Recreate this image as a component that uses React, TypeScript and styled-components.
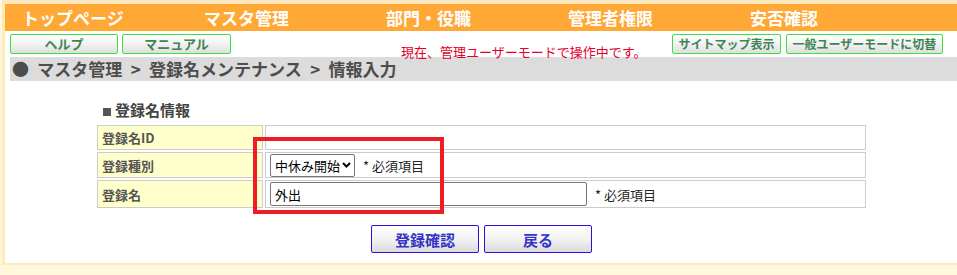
import * as React from "react";
import styled, { createGlobalStyle } from "styled-components";

const GlobalStyle = createGlobalStyle`
    * { box-sizing: border-box; }
    body {
        margin: 0;
        background: #fff8dc;
        font-family: "Noto Sans CJK JP", "Liberation Sans", sans-serif;
    }
`;

// Outer white page frame with the pale yellow edge
const Frame = styled.div`
    position: relative;
    margin-left: 2px;
    background: #ffffff;
    border-top: 4px solid #fde8c0;
    border-left: 3px solid #fdecb8;
    border-bottom: 2px solid #fdecb8;
    padding-bottom: 10px;
`;

// Orange global navigation
const NavBar = styled.nav`
    display: grid;
    grid-template-columns: repeat(5, 182px);
    height: 27px;
    padding-left: 17px;
    background: #ffa836;
`;

const NavItem = styled.a`
    color: #ffffff;
    font-size: 17px;
    font-weight: bold;
    line-height: 27px;
    white-space: nowrap;
    text-decoration: none;
`;

const ToolRow = styled.div`
    display: flex;
    align-items: flex-start;
    height: 26px;
    padding: 3px 14px 0 5px;
`;

const ButtonGroup = styled.div<{ $gap: number, $auto?: boolean }>`
    display: flex;
    gap: ${props => props.$gap}px;
    margin-left: ${props => props.$auto ? "auto" : "0"};
`;

const GreenButton = styled.button<{ $width: number, $size: number }>`
    width: ${props => props.$width}px;
    height: 20px;
    padding: 0;
    border: 1px solid #3ae23a;
    border-radius: 2px;
    background: linear-gradient(#ffffff, #f2f2f2 50%, #dedede);
    color: #3f8455;
    font-family: inherit;
    font-size: ${props => props.$size}px;
    font-weight: bold;
    line-height: 18px;
    white-space: nowrap;
`;

const ModeMessage = styled.span`
    margin: 10px 0 0 170px;
    color: #e4002b;
    font-size: 13px;
    line-height: 15px;
    white-space: nowrap;
`;

const Breadcrumb = styled.div`
    margin-left: 5px;
    height: 24px;
    padding-left: 2px;
    background: #dcdcdc;
    color: #4d4d4d;
    font-size: 17px;
    font-weight: bold;
    line-height: 24px;
    word-spacing: 4.5px;
    white-space: nowrap;
`;

const FormArea = styled.section`
    width: 773px;
    margin: 20px 0 0 90px;
`;

const SectionTitle = styled.h2`
    margin: 0 0 4px;
    padding-left: 8px;
    color: #444444;
    font-size: 15px;
    font-weight: bold;
    line-height: 18px;
`;

const Square = styled.span`
    display: inline-block;
    width: 8px;
    height: 8px;
    margin-right: 4px;
    background: #555555;
`;

const FormGrid = styled.div`
    display: grid;
    grid-template-columns: 166px 601px;
    grid-template-rows: 25px 26px 28px;
    gap: 2px;
    padding: 2px;
`;

const LabelCell = styled.div`
    display: flex;
    align-items: center;
    padding-left: 4px;
    border: 1px solid #cccccc;
    background: #ffffcc;
    color: #555555;
    font-size: 13px;
    font-weight: bold;
`;

const ValueCell = styled.div`
    display: flex;
    align-items: center;
    gap: 8px;
    padding: 0 4px;
    border: 1px solid #cccccc;
    color: #222222;
    font-size: 13px;
`;

const SelectBox = styled.div`
    display: flex;
    align-items: center;
    justify-content: space-between;
    width: 85px;
    height: 23px;
    padding: 0 3px 0 4px;
    border: 1px solid #767676;
    border-radius: 2px;
    color: #000000;
    font-size: 13px;
`;

const TextInput = styled.input`
    width: 317px;
    height: 24px;
    padding: 0 4px;
    border: 1px solid #767676;
    border-radius: 2px;
    color: #000000;
    font-family: inherit;
    font-size: 13px;
`;

const Required = styled.span`
    white-space: nowrap;
`;

const Actions = styled.div`
    display: flex;
    justify-content: center;
    gap: 5px;
    margin-top: 15px;
`;

const BlueButton = styled.button`
    width: 108px;
    height: 28px;
    padding: 0;
    border: 1px solid #2a10e6;
    border-radius: 2px;
    background: linear-gradient(#ffffff, #f3f3f3 50%, #dadada);
    color: #3434c4;
    font-family: inherit;
    font-size: 15px;
    font-weight: bold;
`;

// Red annotation drawn over the form
const Highlight = styled.div`
    position: absolute;
    left: 248px;
    top: 133px;
    width: 191px;
    height: 77px;
    border: 4px solid #ee1c24;
    pointer-events: none;
`;

const navItems = ["トップページ", "マスタ管理", "部門・役職", "管理者権限", "安否確認"];

const App = () => {
    return (
        <>
            <GlobalStyle />
            <Frame>
                <NavBar>
                    {navItems.map(item => <NavItem key={item}>{item}</NavItem>)}
                </NavBar>
                <ToolRow>
                    <ButtonGroup $gap={4}>
                        <GreenButton $width={108} $size={13}>ヘルプ</GreenButton>
                        <GreenButton $width={109} $size={13}>マニュアル</GreenButton>
                    </ButtonGroup>
                    <ModeMessage>現在、管理ユーザーモードで操作中です。</ModeMessage>
                    <ButtonGroup $gap={5} $auto>
                        <GreenButton $width={109} $size={12}>サイトマップ表示</GreenButton>
                        <GreenButton $width={157} $size={12}>一般ユーザーモードに切替</GreenButton>
                    </ButtonGroup>
                </ToolRow>
                <Breadcrumb>● マスタ管理 &gt; 登録名メンテナンス &gt; 情報入力</Breadcrumb>
                <FormArea>
                    <SectionTitle><Square />登録名情報</SectionTitle>
                    <FormGrid>
                        <LabelCell>登録名ID</LabelCell>
                        <ValueCell />
                        <LabelCell>登録種別</LabelCell>
                        <ValueCell>
                            <SelectBox>
                                <span>中休み開始</span>
                                <svg width="9" height="6" viewBox="0 0 9 6">
                                    <polyline points="1,1 4.5,4.5 8,1" fill="none" stroke="#000" strokeWidth="2" />
                                </svg>
                            </SelectBox>
                            <Required>* 必須項目</Required>
                        </ValueCell>
                        <LabelCell>登録名</LabelCell>
                        <ValueCell>
                            <TextInput defaultValue="外出" />
                            <Required>* 必須項目</Required>
                        </ValueCell>
                    </FormGrid>
                    <Actions>
                        <BlueButton>登録確認</BlueButton>
                        <BlueButton>戻る</BlueButton>
                    </Actions>
                </FormArea>
                <Highlight />
            </Frame>
        </>
    );
};

export default App;
